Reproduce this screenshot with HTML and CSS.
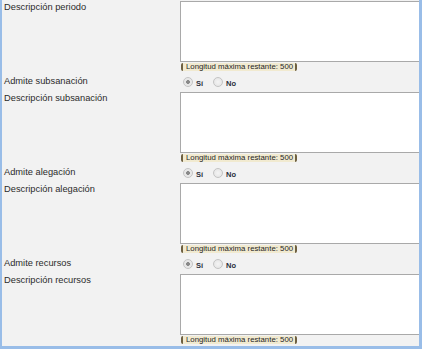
FILE: index.html
```html
<!DOCTYPE html>
<html lang="es">
<head>
<meta charset="utf-8">
<link rel="stylesheet" href="styles.css">
</head>
<body>
<div class="panel">
  <div class="row desc">
    <div class="label">Descripción periodo</div>
    <div class="field"><textarea class="ta"></textarea><span class="count">Longitud máxima restante: 500</span></div>
  </div>
  <div class="row choice">
    <div class="label">Admite subsanación</div>
    <div class="field radios">
      <label class="opt"><input type="radio" name="r1" checked disabled><span>Sí</span></label>
      <label class="opt"><input type="radio" name="r1" disabled><span>No</span></label>
    </div>
  </div>
  <div class="row desc">
    <div class="label">Descripción subsanación</div>
    <div class="field"><textarea class="ta"></textarea><span class="count">Longitud máxima restante: 500</span></div>
  </div>
  <div class="row choice">
    <div class="label">Admite alegación</div>
    <div class="field radios">
      <label class="opt"><input type="radio" name="r2" checked disabled><span>Sí</span></label>
      <label class="opt"><input type="radio" name="r2" disabled><span>No</span></label>
    </div>
  </div>
  <div class="row desc">
    <div class="label">Descripción alegación</div>
    <div class="field"><textarea class="ta"></textarea><span class="count">Longitud máxima restante: 500</span></div>
  </div>
  <div class="row choice">
    <div class="label">Admite recursos</div>
    <div class="field radios">
      <label class="opt"><input type="radio" name="r3" checked disabled><span>Sí</span></label>
      <label class="opt"><input type="radio" name="r3" disabled><span>No</span></label>
    </div>
  </div>
  <div class="row desc">
    <div class="label">Descripción recursos</div>
    <div class="field"><textarea class="ta"></textarea><span class="count">Longitud máxima restante: 500</span></div>
  </div>
</div>
</body>
</html>
```
FILE: styles.css
```css
html, body {
  margin: 0;
  padding: 0;
  background: #ffffff;
}
.panel {
  box-sizing: border-box;
  width: 422px;
  height: 349px;
  background: #f2f2f2;
  border-left: 2px solid #99bde8;
  border-right: 3px solid #99bde8;
  border-bottom: 3px solid #99bde8;
  font-family: "Liberation Sans", Arial, sans-serif;
  color: #2b2b2b;
  overflow: hidden;
}
.row {
  display: grid;
  grid-template-columns: 178px 1fr;
}
.row.desc {
  height: 72px;
}
.row.choice {
  height: 19px;
  align-items: center;
}
.label {
  font-size: 9.3px;
  line-height: 11px;
  padding-left: 2px;
}
.desc .label {
  padding-top: 2px;
}
.field {
  display: flex;
  flex-direction: column;
  align-items: flex-start;
}
.ta {
  box-sizing: border-box;
  display: block;
  width: 100%;
  height: 61px;
  margin: 1px 0 0 0;
  padding: 0;
  border: 1px solid #a9a9a9;
  border-right: 0;
  background: #ffffff;
  resize: none;
}
.count {
  display: inline-block;
  margin: 1px 0 0 1px;
  height: 8px;
  line-height: 8px;
  padding: 0 2px 0 3px;
  font-size: 7.8px;
  color: #1f1f1f;
  background: #f1ead0;
  border-left: 2px solid #6e6040;
  border-right: 2px solid #6e6040;
  border-radius: 2px;
  white-space: nowrap;
}
.radios {
  flex-direction: row;
  align-items: center;
  gap: 10px;
  padding-left: 3px;
}
.opt {
  display: flex;
  align-items: center;
  gap: 3px;
}
.opt input {
  -webkit-appearance: none;
  appearance: none;
  box-sizing: border-box;
  width: 10px;
  height: 10px;
  margin: 0;
  border: 1px solid #c4c4c4;
  border-radius: 50%;
  background: radial-gradient(circle at 50% 50%, #f4f4f4 0, #e2e2e2 100%);
}
.opt input:checked {
  background: radial-gradient(circle at 50% 50%, #8a8a8a 0, #8a8a8a 1.6px, #e6e6e6 2.2px, #ececec 100%);
}
.opt span {
  font-size: 7.5px;
  font-weight: bold;
  color: #2a2f3c;
  padding-top: 3px;
}
```
